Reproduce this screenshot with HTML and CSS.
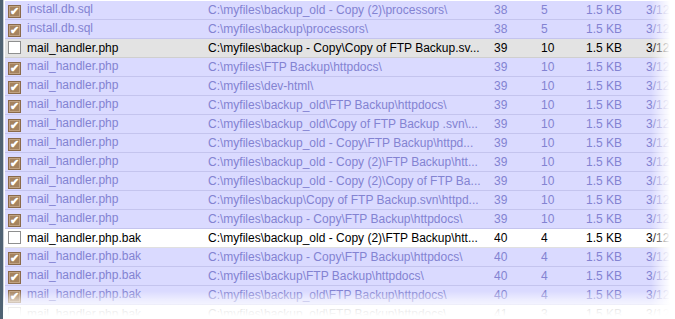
FILE: index.html
```html
<!DOCTYPE html>
<html lang="en">
<head>
    <meta charset="UTF-8">
    <title>Duplicate files</title>
    <link rel="stylesheet" href="styles.css">
</head>
<body>
    <div class="frame">
        <table class="list" id="list"></table>
        <div class="fade-right"></div>
        <div class="fade-bottom"></div>
    </div>

    <script>
        // name, path, a, b, state ("dup" = checked, "gray" = current, "white" = master)
        const rows = [
            ["install.db.sql", "C:\\myfiles\\backup_old - Copy (2)\\processors\\", 38, 5, "dup"],
            ["install.db.sql", "C:\\myfiles\\backup\\processors\\", 38, 5, "dup"],
            ["mail_handler.php", "C:\\myfiles\\backup - Copy\\Copy of FTP Backup.sv...", 39, 10, "gray"],
            ["mail_handler.php", "C:\\myfiles\\FTP Backup\\httpdocs\\", 39, 10, "dup"],
            ["mail_handler.php", "C:\\myfiles\\dev-html\\", 39, 10, "dup"],
            ["mail_handler.php", "C:\\myfiles\\backup_old\\FTP Backup\\httpdocs\\", 39, 10, "dup"],
            ["mail_handler.php", "C:\\myfiles\\backup_old\\Copy of FTP Backup .svn\\...", 39, 10, "dup"],
            ["mail_handler.php", "C:\\myfiles\\backup_old - Copy\\FTP Backup\\httpd...", 39, 10, "dup"],
            ["mail_handler.php", "C:\\myfiles\\backup_old - Copy (2)\\FTP Backup\\htt...", 39, 10, "dup"],
            ["mail_handler.php", "C:\\myfiles\\backup_old - Copy (2)\\Copy of FTP Ba...", 39, 10, "dup"],
            ["mail_handler.php", "C:\\myfiles\\backup\\Copy of FTP Backup.svn\\httpd...", 39, 10, "dup"],
            ["mail_handler.php", "C:\\myfiles\\backup - Copy\\FTP Backup\\httpdocs\\", 39, 10, "dup"],
            ["mail_handler.php.bak", "C:\\myfiles\\backup_old - Copy (2)\\FTP Backup\\htt...", 40, 4, "white"],
            ["mail_handler.php.bak", "C:\\myfiles\\backup - Copy\\FTP Backup\\httpdocs\\", 40, 4, "dup"],
            ["mail_handler.php.bak", "C:\\myfiles\\backup\\FTP Backup\\httpdocs\\", 40, 4, "dup"],
            ["mail_handler.php.bak", "C:\\myfiles\\backup_old\\FTP Backup\\httpdocs\\", 40, 4, "dup"],
            ["mail_handler.php.bak", "C:\\myfiles\\backup_old\\FTP Backup\\httpdocs\\", 41, 3, "white"]
        ];

        const list = document.getElementById("list");
        for (let [name, path, a, b, state] of rows) {
            let row = list.insertRow();
            row.className = state;
            let box = state === "dup" ? '<span class="box checked">&#10004;</span>' : '<span class="box"></span>';
            row.innerHTML =
                '<td class="c-name">' + box + name + '</td>' +
                '<td class="c-path">' + path + '</td>' +
                '<td class="c-a">' + a + '</td>' +
                '<td class="c-b">' + b + '</td>' +
                '<td class="c-size">1.5 KB</td>' +
                '<td class="c-date">3/12</td>';
        }
    </script>
</body>
</html>
```

FILE: styles.css
```css
body {
    margin: 0;
    background-color: #fff;
    font-family: "Liberation Sans", Arial, sans-serif;
    font-size: 12px;
    overflow: hidden;
}
.frame {
    position: relative;
    height: 319px;
    overflow: hidden;
    border-left: 3px solid #4f6273;
    padding-left: 2px;
    padding-top: 1px;
    box-sizing: border-box;
    box-shadow: inset 1px 0 0 #c9ced3;
}
.list {
    border-collapse: collapse;
    table-layout: fixed;
    width: 700px;
}
.list td {
    height: 18px;
    padding: 0;
    border-bottom: 1px solid #c4c4ee;
    white-space: nowrap;
    overflow: hidden;
}
.list tr.dup td {
    background-color: #dadaff;
    color: #8383d2;
}
.list tr.gray td {
    background-color: #e3e3e3;
    color: #000;
    border-bottom-color: #cfcfcf;
}
.list tr.white td {
    background-color: #fff;
    color: #000;
    border-bottom-color: #e0e0e0;
}
.c-name { width: 203px; }
.c-path { width: 286px; }
.c-a { width: 47px; }
.c-b { width: 45px; }
.c-size { width: 60px; }
.c-date { width: 59px; }
.box {
    display: inline-block;
    width: 11px;
    height: 11px;
    margin: 0 6px 0 3px;
    border: 1px solid #8e8f8f;
    background-color: #fff;
    vertical-align: -2px;
    font-size: 11px;
    line-height: 11px;
    text-align: center;
    color: #fff;
}
.box.checked {
    background-color: #a5835f;
    border-color: #8a6a4a;
    box-shadow: inset 0 0 0 1px #c0a282;
    font-weight: bold;
}
.fade-right {
    position: absolute;
    top: 0;
    right: 0;
    width: 24px;
    height: 100%;
    background: linear-gradient(to right, rgba(255,255,255,0), rgba(255,255,255,0.6) 45%, #fff 80%);
}
.fade-bottom {
    position: absolute;
    left: 0;
    bottom: 0;
    width: 100%;
    height: 28px;
    background: linear-gradient(to bottom, rgba(255,255,255,0), rgba(255,255,255,0.5) 30%, rgba(255,255,255,0.9) 65%, #fff 90%);
}
```
